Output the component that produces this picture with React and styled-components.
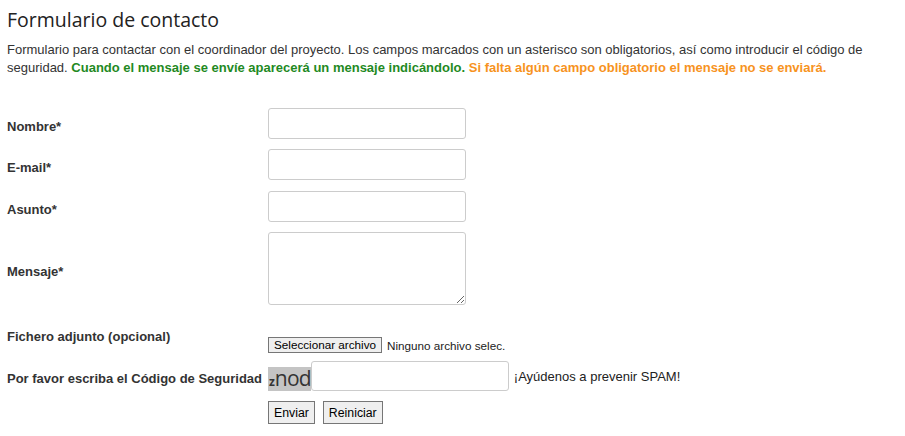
import styled, { createGlobalStyle } from "styled-components";

const GlobalStyle = createGlobalStyle`
  body {
    margin: 0;
    background: #fff;
    font-family: "Liberation Sans", Arial, sans-serif;
    color: #333;
  }
`;

const Page = styled.div`
  padding: 6px 7px 0;
`;

const Title = styled.h2`
  margin: 0;
  font-family: "Open Sans", "Noto Sans", sans-serif;
  font-weight: 400;
  font-size: 19.5px;
  line-height: 28px;
  color: #222;
`;

const Intro = styled.p`
  margin: 7px 0 0;
  font-size: 13px;
  line-height: 18px;
  width: 870px;
`;

const Note = styled.strong`
  color: ${(p) => p.$color};
`;

const Form = styled.form`
  display: flex;
  flex-direction: column;
  margin-top: 31px;
`;

const Row = styled.div`
  display: grid;
  grid-template-columns: 261px auto;
  align-items: ${(p) => p.$align || "center"};
  margin-bottom: ${(p) => p.$gap ?? 10}px;
`;

const Label = styled.label`
  font-size: 13px;
  font-weight: bold;
  padding-top: ${(p) => p.$offset ?? 6}px;
`;

const Input = styled.input`
  box-sizing: border-box;
  width: 198px;
  height: ${(p) => p.$h || 31}px;
  border: 1px solid #ccc;
  border-radius: 3px;
  margin: 0;
  padding: 2px 4px;
`;

const TextArea = styled.textarea`
  box-sizing: border-box;
  width: 198px;
  height: 73px;
  border: 1px solid #ccc;
  border-radius: 3px;
  margin: 0;
  resize: both;
`;

const Inline = styled.div`
  display: flex;
  align-items: center;
  gap: ${(p) => p.$gap ?? 0}px;
  padding-top: ${(p) => p.$top ?? 0}px;
`;

const FileButton = styled.button`
  height: 16px;
  padding: 0 5px;
  border: 1px solid #767676;
  border-radius: 0;
  background: #efefef;
  font-family: "Liberation Sans", Arial, sans-serif;
  font-size: 11.7px;
  line-height: 14px;
  color: #000;
`;

const Hint = styled.span`
  font-size: ${(p) => p.$size || 11.7}px;
  color: #222;
  margin-left: ${(p) => p.$left ?? 5}px;
`;

const Captcha = styled.span`
  display: flex;
  align-items: baseline;
  box-sizing: border-box;
  height: 24px;
  margin-top: 6px;
  padding: 0 0 0 1px;
  background: #c4c4c4;
  font-family: "Open Sans", "Noto Sans", sans-serif;
  color: #333;
  line-height: 22px;
`;

const CaptchaSmall = styled.span`
  font-size: 12px;
  font-weight: bold;
`;

const CaptchaBig = styled.span`
  font-size: 21px;
  letter-spacing: -0.8px;
`;

const Button = styled.button`
  height: 23px;
  padding: 0 5px;
  border: 1px solid #767676;
  border-radius: 0;
  background: #efefef;
  font-family: "Liberation Sans", Arial, sans-serif;
  font-size: 12.3px;
  color: #000;
`;

function App() {
  return (
    <Page>
      <GlobalStyle />
      <Title>Formulario de contacto</Title>
      <Intro>
        Formulario para contactar con el coordinador del proyecto. Los campos marcados con un asterisco son
        obligatorios, así como introducir el código de seguridad.{" "}
        <Note $color="#1f8a1f">Cuando el mensaje se envíe aparecerá un mensaje indicándolo.</Note>{" "}
        <Note $color="#f7931e">Si falta algún campo obligatorio el mensaje no se enviará.</Note>
      </Intro>
      <Form onSubmit={(e) => e.preventDefault()}>
        <Row>
          <Label>Nombre*</Label>
          <Input type="text" />
        </Row>
        <Row $gap={11}>
          <Label>E-mail*</Label>
          <Input type="text" />
        </Row>
        <Row>
          <Label>Asunto*</Label>
          <Input type="text" />
        </Row>
        <Row $gap={24}>
          <Label>Mensaje*</Label>
          <TextArea />
        </Row>
        <Row $align="start" $gap={8}>
          <Label $offset={0}>Fichero adjunto (opcional)</Label>
          <Inline $top={8}>
            <FileButton type="button">Seleccionar archivo</FileButton>
            <Hint>Ninguno archivo selec.</Hint>
          </Inline>
        </Row>
        <Row $gap={10}>
          <Label $offset={4}>Por favor escriba el Código de Seguridad</Label>
          <Inline>
            <Captcha>
              <CaptchaSmall>z</CaptchaSmall>
              <CaptchaBig>nod</CaptchaBig>
            </Captcha>
            <Input type="text" $h={30} />
            <Hint $size={13} $left={5}>¡Ayúdenos a prevenir SPAM!</Hint>
          </Inline>
        </Row>
        <Row>
          <span />
          <Inline $gap={8}>
            <Button type="submit">Enviar</Button>
            <Button type="reset">Reiniciar</Button>
          </Inline>
        </Row>
      </Form>
    </Page>
  );
}

export default App;
